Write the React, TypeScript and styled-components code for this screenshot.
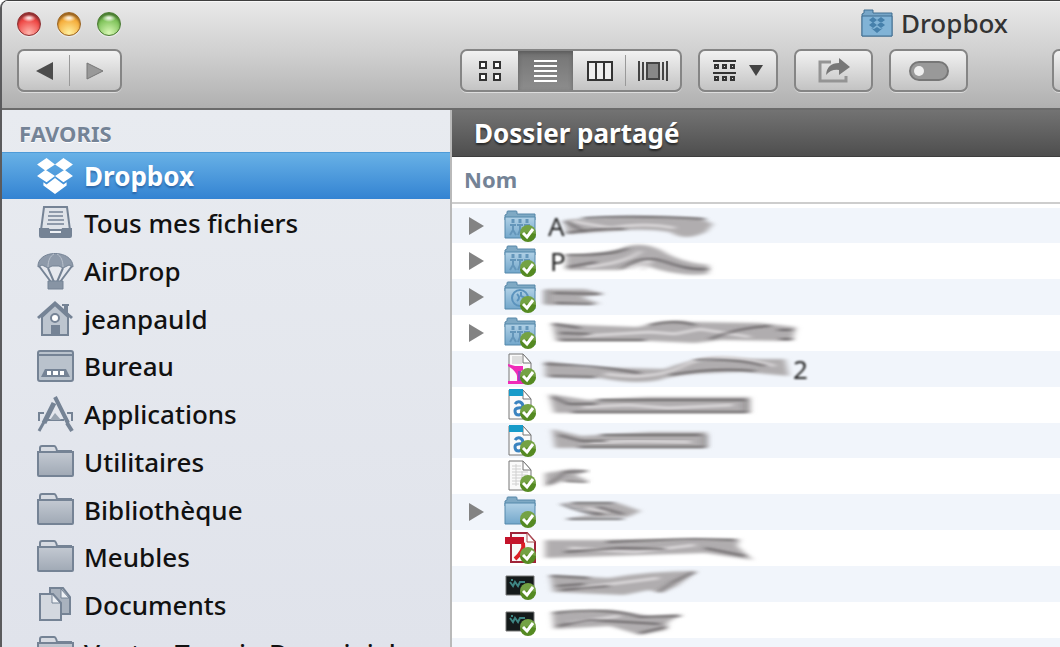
import React from "react";
import styled, { createGlobalStyle, css } from "styled-components";

const Global = createGlobalStyle`
  * { box-sizing: border-box; }
  body { margin: 0; background: #fff; font-family: "Noto Sans", "Open Sans", sans-serif; color: #111; overflow: hidden; }
  ul { list-style: none; margin: 0; padding: 0; }
  button { font: inherit; color: inherit; }
  svg { display: block; flex: none; }
`;

const Window = styled.main`
  display: flex;
  flex-direction: column;
  height: 100vh;
  overflow: hidden;
  border-left: 2px solid #5b5b5d;
  border-top: 1px solid #3f3f3f;
  border-top-left-radius: 8px;
`;

const Chrome = styled.header`
  flex: none;
  padding: 6px 0 16px;
  background: linear-gradient(#e9e9e9, #cfcfcf 50%, #b0b0b0);
  border-bottom: 2px solid #6b6b6b;
  box-shadow: inset 0 1px 0 #f8f8f8;
  overflow: hidden;
`;

const TitleRow = styled.div`
  display: flex;
  align-items: center;
  justify-content: space-between;
  height: 34px;
  padding: 0 52px 0 15px;
`;

const Lights = styled.div`
  display: flex;
  gap: 16px;
`;

const Light = styled.button<{ $edge: string; $mid: string; $low: string }>`
  width: 24px;
  height: 24px;
  padding: 0;
  border: 1px solid ${(p) => p.$edge};
  border-radius: 50%;
  background:
    radial-gradient(ellipse 7px 4px at 50% 5px, #fffc 20%, #fff0),
    radial-gradient(circle at 50% 90%, ${(p) => p.$low}, ${(p) => p.$mid} 60%, ${(p) => p.$edge});
  box-shadow: inset 0 2px 2px ${(p) => p.$edge}, 0 1px 1px #fff9;
`;

const Title = styled.h1`
  display: flex;
  align-items: center;
  align-self: flex-start;
  gap: 8px;
  margin: 0;
  font-size: 26px;
  font-weight: 500;
  line-height: 32px;
  color: #333;
`;

const Tools = styled.div`
  display: flex;
  gap: 16px;
  margin-top: 8px;
  padding-left: 15px;
`;

const Group = styled.div<{ $before?: number }>`
  display: flex;
  flex: none;
  height: 43px;
  margin-left: ${(p) => p.$before ?? 0}px;
  border: 2px solid #858585;
  border-radius: 7px;
  background: linear-gradient(#f2f2f2, #c3c3c3);
  box-shadow: 0 1px 0 #ddd;
  overflow: hidden;
`;

const Tool = styled.button<{ $width: number; $on?: boolean; $split?: boolean }>`
  position: relative;
  display: flex;
  align-items: center;
  justify-content: center;
  gap: 12px;
  width: ${(p) => p.$width}px;
  padding: 0;
  border: 0;
  background: none;
  ${(p) => p.$on && css`
    background: linear-gradient(#747474, #8d8d8d);
    box-shadow: inset 0 2px 4px #4448;
  `}
  ${(p) => p.$split && css`
    &::after {
      content: "";
      position: absolute;
      right: 0;
      top: 4px;
      bottom: 4px;
      width: 1px;
      background: #999;
    }
  `}
`;

const Body = styled.div`
  display: flex;
  flex: 1;
  min-height: 0;
`;

const Sidebar = styled.nav`
  flex: 0 0 450px;
  border-right: 2px solid #b9b9b9;
  background: linear-gradient(#e8ebf0, #e0e3eb);
  overflow: hidden;
`;

const SideHeading = styled.h2`
  height: 42px;
  margin: 0;
  padding-left: 17px;
  font-size: 22px;
  font-weight: 700;
  line-height: 46px;
  color: #748396;
  text-shadow: 0 1px 0 #fff;
`;

const Place = styled.a<{ $on?: boolean }>`
  display: flex;
  align-items: center;
  gap: 10px;
  height: 48px;
  padding-left: 34px;
  font-size: 26px;
  font-weight: 500;
  line-height: 34px;
  color: #111;
  text-decoration: none;
  white-space: nowrap;
  li:nth-child(4n) > & { height: 47px; }
  ${(p) => p.$on && css`
    height: 47px;
    border-top: 1px solid #4e9bd8;
    background: linear-gradient(#68b1e6, #3383d2);
    color: #fff;
    font-weight: 700;
    text-shadow: 0 2px 2px #1f4f8a99;
  `}
`;

const Content = styled.section`
  flex: 1;
  min-width: 0;
  background: #fff;
  overflow: hidden;
`;

const Banner = styled.h2`
  margin: 0;
  padding-left: 22px;
  border-bottom: 1px solid #3e3e3e;
  background: linear-gradient(#737373, #4e4e4e);
  font-size: 26px;
  font-weight: 700;
  line-height: 46px;
  color: #fff;
  text-shadow: 0 2px 2px #0008;
`;

const Files = styled.table`
  width: 100%;
  border-collapse: collapse;
  th {
    height: 46px;
    padding: 0 0 2px 12px;
    border-bottom: 2px solid #cdcdcd;
    text-align: left;
    font-size: 22px;
    font-weight: 700;
    line-height: 28px;
    color: #748396;
  }
  td { padding: 0; }
  tbody::before { content: ""; display: block; height: 4px; }
  tbody tr:nth-child(odd) { background: #f1f5fb; }
`;

const FileRow = styled.div`
  display: flex;
  align-items: center;
  height: 36px;
  padding-left: 16px;
  tr:nth-child(6n + 1) & { height: 35px; }
`;

const Disclosure = styled.button`
  display: flex;
  flex: none;
  width: 36px;
  padding: 0;
  border: 0;
  background: none;
`;

const Kept = styled.span`
  font-size: 26px;
  line-height: 34px;
  color: #222;
  filter: blur(1px);
`;

const NameCell = styled.div<{ $indent: number }>`
  display: flex;
  align-items: center;
  height: 36px;
  margin-left: ${(p) => p.$indent}px;
`;

/* ---------- drawings ---------- */

const Boxes = ({ size, fill }: { size: number; fill: string }) => (
  <svg width={size} height={size} viewBox="0 0 36 36" fill={fill}>
    <path d="M10 1l8 6-9 6-8-6zM26 1l9 6-8 6-9-6zM1 18l8-6 9 6-8 6zM27 12l8 6-9 6-8-6zM18 20l8 6 3-2v3l-11 8-11-8v-3l3 2z" />
  </svg>
);

const Stroke = "#758395";

const Drawer = () => (
  <svg width="38" height="38" viewBox="0 0 38 38">
    <path d="M8 3h23l3 23H5z" fill="#dfe3e9" stroke={Stroke} strokeWidth="2" />
    <path d="M13 8h14M12 12h15M12 16h16M11 20h17" stroke={Stroke} strokeWidth="1.500" />
    <path d="M3 24h10l1 3h11l1-3h10v8q0 2-2 2H5q-2 0-2-2z" fill={Stroke} />
    <path d="M14 27h11v2H14z" fill="#eef1f5" />
  </svg>
);
const Parachute = () => (
  <svg width="38" height="38" viewBox="0 0 38 38">
    <path d="M3 14l12 16M36 14L24 30M12 16l6 14M27 16l-6 14" stroke={Stroke} strokeWidth="2" />
    <path d="M2 15C1-3 37-3 37 15l-4-2-6 3-4-2h-7l-4 2-6-3z" fill="#8e9aaa" stroke={Stroke} strokeWidth="1" />
    <path d="M12 15c0-6 2-11 6-13M27 15c0-6-2-11-6-13" stroke="#b9c1cc" fill="none" />
    <path d="M12 29h15v8H12z" fill="#8794a4" stroke={Stroke} />
  </svg>
);
const House = () => (
  <svg width="38" height="38" viewBox="0 0 38 38">
    <path d="M6 17L19 5l13 12v18H6z" fill="#bdc5cf" stroke={Stroke} strokeWidth="2" />
    <path d="M2 18L19 3l17 15" fill="none" stroke={Stroke} strokeWidth="3" />
    <path d="M26 4h7v2h-1v8l-4-4V6h-2zM15 25h9v10h-9z" fill={Stroke} />
    <circle cx="19" cy="18" r="4" fill="#fff" stroke={Stroke} strokeWidth="2" />
  </svg>
);
const Desktop = () => (
  <svg width="38" height="38" viewBox="0 0 38 38">
    <rect x="2" y="4" width="35" height="30" rx="2" fill="#b9c2cc" stroke={Stroke} strokeWidth="2" />
    <path d="M3 8h33" stroke={Stroke} strokeWidth="2" />
    <path d="M9 22h21l4 8H5z" fill={Stroke} />
    <path d="M11 24h4v4h-4zM17 24h5v4h-5zM24 24h4v4h-4z" fill="#fff" />
  </svg>
);
const Apps = () => (
  <svg width="38" height="38" viewBox="0 0 38 38" fill="none">
    <path d="M3 26v-8h5M36 26v-8h-5M11 25h17" stroke={Stroke} strokeWidth="2" />
    <path d="M14 25l5-7 6 7z" fill="#9aa5b2" />
    <path d="M18 8L8 28" stroke={Stroke} strokeWidth="5" />
    <path d="M8 27l-5 9" stroke={Stroke} strokeWidth="3" />
    <path d="M19 2l13 26M31 28l5 8" stroke={Stroke} strokeWidth="4" />
  </svg>
);
const GreyFolder = () => (
  <svg width="38" height="38" viewBox="0 0 38 38">
    <defs>
      <linearGradient id="grey" x2="0" y2="1"><stop stopColor="#c3c9d2" /><stop offset="1" stopColor="#a0a9b5" /></linearGradient>
    </defs>
    <path d="M4 9V5q0-2 2-2h12q2 0 3 5h15" fill="#d7dbe2" stroke={Stroke} strokeWidth="2" />
    <path d="M2 9h35v23q0 1-1 1H3q-1 0-1-1z" fill="url(#grey)" stroke={Stroke} strokeWidth="2" />
  </svg>
);
const Papers = () => (
  <svg width="38" height="38" viewBox="0 0 38 38">
    <path d="M14 2h13l7 9v17H14z" fill="#a9b2be" stroke={Stroke} strokeWidth="2" />
    <path d="M25 3v9h8z" fill="#eef1f5" stroke={Stroke} />
    <path d="M4 8h13l8 9v17H4z" fill="#d3d8df" stroke={Stroke} strokeWidth="2" />
    <path d="M16 8v9h8z" fill="#eef1f5" stroke={Stroke} />
  </svg>
);

const Badge = () => (
  <g>
    <circle cx="24" cy="24" r="8" fill="#74a244" />
    <path d="M16 25a8 8 0 0 0 16 0q-8-3-16 0z" fill="#558a22" />
    <path d="M19 24l4 4 6-8" fill="none" stroke="#fff" strokeWidth="3" />
  </g>
);

type Kind = "people" | "globe" | "folder" | "magenta" | "calc" | "text" | "pdf" | "term";

const FileIcon = ({ kind }: { kind: Kind }) => {
  const folder = kind === "people" || kind === "globe" || kind === "folder";
  const sheet = kind === "magenta" || kind === "calc" || kind === "text";
  return (
    <svg width="32" height="34" viewBox="0 0 32 34">
      <defs>
        <linearGradient id="blue" x2="0" y2="1"><stop stopColor="#b1d1e6" /><stop offset="1" stopColor="#73a7cb" /></linearGradient>
      </defs>
      {folder && <>
        <path d="M1 6l2-1V3q0-1 1-1h8q1 0 1 1v2h18v6H1z" fill="#7fa9c4" stroke="#5687a8" />
        <path d="M1 8h30v21H1z" fill="url(#blue)" stroke="#5588ab" />
      </>}
      {kind === "people" && (
        <g fill="none" stroke="#6496ba" strokeWidth="2">
          <path d="M9 10v4M16 10v4M23 10v4" strokeWidth="3" />
          <path d="M6 16h6M13 16h6M20 16h6M9 15v6l-3 5M9 21l3 5M16 15v6l-2 5M16 21l2 5" />
        </g>
      )}
      {kind === "globe" && <g fill="none" stroke="#5b93bd" strokeWidth="2"><circle cx="16" cy="18" r="8" /><path d="M13 14q4 4 0 7M17 12v4l4 2" /></g>}
      {sheet && <>
        <path d="M5 2h14l8 9v20H5z" fill="#fafafa" stroke="#777" />
        <path d="M19 2v9h8z" fill="#fff" stroke="#777" />
      </>}
      {kind === "magenta" && <>
        <path d="M8 4h10v8H8z" fill="#dedede" />
        <path d="M4 12l7 2h8v4q-3 1-3 5v6h4v3H4v-3h9v-5q-1-5-9-10z" fill="#f02bb8" />
        <path d="M14 19h3v10h-3z" fill="#9c3fc4" />
      </>}
      {kind === "calc" && <>
        <path d="M5 1h14v7H5z" fill="#179bc9" />
        <path d="M11 16q2-3 5-2t3 5v8M19 20q-8-1-8 3t4 4l4-2" fill="none" stroke="#3a83c0" strokeWidth="3" />
      </>}
      {kind === "text" && <path d="M8 7h9M8 10h9M8 13h16M8 16h16M8 19h16M8 22h9M8 25h7M12 5v22M18 12v14" stroke="#d0d0d0" />}
      {kind === "pdf" && <>
        <path d="M7 2h16l8 9v20H7z" fill="#f8f8f8" stroke="#a02439" strokeWidth="2" />
        <path d="M23 2v9h8z" fill="#fff" stroke="#a55" />
        <path d="M1 6h19v7H1z" fill="#c4142b" />
        <path d="M19 12q2 7-8 16" fill="none" stroke="#dc1f26" strokeWidth="4" />
      </>}
      {kind === "term" && <>
        <path d="M2 9h28v19H2z" fill="#151a1b" stroke="#777" />
        <path d="M6 15l3 4 2-4 3 4 2-4h5M7 13h2" fill="none" stroke="#3e8583" strokeWidth="2" />
      </>}
      <Badge />
    </svg>
  );
};

/* A rubbed-out name: a soft grey streak with darker and lighter strands. */
const Smear = ({ width, body, dark, light }: { width: number; body: string; dark: string; light?: string }) => (
  <svg width={width} height="36" viewBox={`0 0 ${width} 36`} overflow="visible">
    <defs>
      <filter id="soft" x="-10%" y="-50%" width="120%" height="200%"><feGaussianBlur stdDeviation="3 1.800" /></filter>
      <filter id="fine" x="-10%" y="-50%" width="120%" height="200%"><feGaussianBlur stdDeviation="3 1" /></filter>
    </defs>
    <path d={body} fill="#b0adaf" filter="url(#soft)" />
    {light && <path d={light} fill="none" stroke="#d8d5d7" strokeWidth="3" filter="url(#fine)" />}
    <path d={dark} fill="none" stroke="#4e494c" strokeWidth="2" opacity="0.700" filter="url(#fine)" />
  </svg>
);

type File = { kind: Kind; open?: boolean; indent: number; first?: string; last?: string; width: number; body: string; dark: string; light?: string };

const files: File[] = [
  { kind: "people", open: true, indent: 12, first: "A", width: 150,
    body: "M0 12Q50 8 80 8L135 10 148 16 141 24Q120 34 105 24 80 20 50 23L2 26z",
    dark: "M18 10Q70 7 140 11M2 25Q40 20 60 21M0 13L20 24", light: "M6 13L45 20Q80 14 110 20" },
  { kind: "people", open: true, indent: 14, first: "P", width: 150,
    body: "M0 12Q50 10 62 3 78-1 95 7 115 20 143 22L142 31Q120 34 90 26 70 18 55 27L0 27z",
    dark: "M0 12Q45 13 62 5M56 26Q75 10 100 19T142 26M2 24L30 19", light: "M20 24Q60 20 75 8M64 26L84 16M76 27L86 17" },
  { kind: "globe", open: true, indent: 9, width: 62,
    body: "M0 10L40 10 60 15 36 18 56 25 0 26z",
    dark: "M1 11v14M8 14L55 15M10 24L48 25", light: "M8 19h28" },
  { kind: "people", open: true, indent: 14, width: 250,
    body: "M2 8L32 10 88 12Q120 3 140 7L210 8 246 12 242 26 170 25 145 28 100 26 6 26z",
    dark: "M3 9L30 13M10 18L40 19M10 25H95M100 10Q125 4 145 10M160 24Q190 12 220 11M228 15h14M230 24h12", light: "M34 21L100 17 125 19 150 14 200 22" },
  { kind: "magenta", indent: 9, last: "2", width: 248,
    body: "M0 10L40 16 120 18Q150 6 180 8L240 8 244 25 200 21Q130 22 115 29 90 34 55 27L0 26z",
    dark: "M0 13Q50 14 95 22M5 25L50 26M125 24Q170 16 210 20M150 9Q190 7 220 15", light: "M60 23Q110 30 140 14T230 15" },
  { kind: "calc", indent: 12, width: 206,
    body: "M1 7L40 13 100 10H202V26H6z",
    dark: "M5 10L20 17 48 17M24 25H200M50 13H198M198 13v12", light: "M35 20L80 18 120 21 185 18" },
  { kind: "calc", indent: 15, width: 160,
    body: "M1 6L30 13 100 9H156V25H4z",
    dark: "M8 12L30 18 55 18M28 24H154M50 12H150M154 12v12", light: "M40 20L80 18 140 19" },
  { kind: "text", indent: 9, width: 50,
    body: "M0 15L28 11 42 13 30 17 44 23 18 23 0 29z", dark: "M4 26Q15 19 20 14L42 13M20 23L42 24", light: "M4 18L26 18" },
  { kind: "folder", open: true, indent: 22, width: 86,
    body: "M3 9L60 9 83 17 70 23 8 25 36 20z", dark: "M4 10Q25 20 45 20M14 9h42M10 25h55M40 13L65 20", light: "M28 14L50 18" },
  { kind: "pdf", indent: 9, width: 210,
    body: "M0 10H60L195 9 192 16 208 30 160 23 0 28z", dark: "M62 12Q110 10 150 9L190 10M20 22L75 18 120 19M160 18L200 26", light: "M24 18L90 22 150 15" },
  { kind: "term", indent: 13, width: 150,
    body: "M1 9L60 12Q100 5 148 5L128 20 112 27 100 24 75 29 4 26z", dark: "M2 10L40 12M8 20L35 18M110 26L124 16 145 6M12 24L60 20", light: "M30 22L110 12" },
  { kind: "term", indent: 14, width: 140,
    body: "M2 10L60 8 100 14 132 12 118 20 116 28 90 33 60 24 4 27z", dark: "M4 11Q60 5 90 15L130 14M8 24L40 18 110 22M90 31L116 25", light: "M20 21L70 14" },
];

const places: [string, () => React.JSX.Element][] = [
  ["Tous mes fichiers", Drawer],
  ["AirDrop", Parachute],
  ["jeanpauld", House],
  ["Bureau", Desktop],
  ["Applications", Apps],
  ["Utilitaires", GreyFolder],
  ["Bibliothèque", GreyFolder],
  ["Meubles", GreyFolder],
  ["Documents", Papers],
  ["Ventes Terrain Domainial", GreyFolder],
];

export default function App() {
  return (
    <>
      <Global />
      <Window>
        <Chrome>
          <TitleRow>
            <Lights>
              <Light aria-label="Fermer" $edge="#8e3032" $mid="#ee4744" $low="#ffb4ac" />
              <Light aria-label="Réduire" $edge="#9b6421" $mid="#f5ad3b" $low="#fff0a0" />
              <Light aria-label="Agrandir" $edge="#4a7c32" $mid="#80c35b" $low="#d8f8b5" />
            </Lights>
            <Title>
              <svg width="32" height="28" viewBox="0 0 32 28">
                <path d="M1 5l2-1V1h9v3h19v23H1z" fill="#77a6c8" stroke="#416f91" />
                <path d="M1 7h30v20H1z" fill="#81b3d6" stroke="#416f91" />
                <path d="M12 8l4 3-4 3-4-3zM20 8l4 3-4 3-4-3zM8 16l4-3 4 3-4 3zM24 16l-4-3-4 3 4 3zM16 18l3 2 3-1-6 5-6-5 3 1z" fill="#4680ab" />
              </svg>
              Dropbox
            </Title>
          </TitleRow>
          <Tools>
            <Group>
              <Tool aria-label="Précédent" $width={51} $split>
                <svg width="18" height="18" viewBox="0 0 18 18"><path d="M0 9L17 0v18z" fill="#4c4c4c" /></svg>
              </Tool>
              <Tool aria-label="Suivant" $width={50}>
                <svg width="18" height="18" viewBox="0 0 18 18"><path d="M17 9L1 1v16z" fill="#999" stroke="#777" /></svg>
              </Tool>
            </Group>
            <Group $before={322}>
              <Tool aria-label="Icônes" $width={56}>
                <svg width="24" height="22" viewBox="0 0 24 22" fill="#fff" stroke="#333" strokeWidth="2">
                  <path d="M2 2h6v6H2zM16 2h6v6h-6zM2 14h6v6H2zM16 14h6v6h-6z" />
                </svg>
              </Tool>
              <Tool aria-label="Liste" $width={55} $on>
                <svg width="24" height="24" viewBox="0 0 24 24" stroke="#fff" strokeWidth="2"><path d="M0 2h23M0 7h23M0 12h23M0 17h23M0 22h23" /></svg>
              </Tool>
              <Tool aria-label="Colonnes" $width={53} $split>
                <svg width="28" height="22" viewBox="0 0 28 22" fill="#eee" stroke="#333" strokeWidth="2"><path d="M2 2h24v18H2zM10 2v18M18 2v18" /></svg>
              </Tool>
              <Tool aria-label="Cover Flow" $width={54}>
                <svg width="32" height="22" viewBox="0 0 32 22" stroke="#444" strokeWidth="2">
                  <path d="M2 1v20M6 2v18M26 2v18M30 1v20" /><path d="M10 3h12v16H10z" fill="#888" />
                </svg>
              </Tool>
            </Group>
            <Group>
              <Tool aria-label="Organiser" $width={76}>
                <svg width="24" height="24" viewBox="0 0 24 24" fill="#ddd" stroke="#333" strokeWidth="2">
                  <path d="M0 2h23M0 14h23M2 6h3v3H2zM10 6h3v3h-3zM18 6h3v3h-3zM2 18h3v3H2zM10 18h3v3h-3zM18 18h3v3h-3z" />
                </svg>
                <svg width="14" height="11" viewBox="0 0 14 11"><path d="M0 0h14L7 11z" fill="#444" /></svg>
              </Tool>
            </Group>
            <Group>
              <Tool aria-label="Partager" $width={75}>
                <svg width="34" height="26" viewBox="0 0 34 26">
                  <path d="M14 4H3v19h26v-5" fill="none" stroke="#949494" strokeWidth="3" />
                  <path d="M9 17Q10 5 22 5V0l11 9-11 8v-5q-8-1-13 5z" fill="#777" />
                </svg>
              </Tool>
            </Group>
            <Group>
              <Tool aria-label="Étiquettes" $width={75}>
                <svg width="40" height="20" viewBox="0 0 40 20">
                  <rect x="1" y="1" width="38" height="18" rx="9" fill="#999" stroke="#777" strokeWidth="2" />
                  <circle cx="10" cy="10" r="5" fill="#eee" />
                </svg>
              </Tool>
            </Group>
            <Group $before={68}>
              <Tool aria-label="Rechercher" $width={76} />
            </Group>
          </Tools>
        </Chrome>
        <Body>
          <Sidebar>
            <SideHeading>FAVORIS</SideHeading>
            <ul>
              <li><Place href="#dropbox" $on><Boxes size={38} fill="#fff" />Dropbox</Place></li>
              {places.map(([name, Icon]) => (
                <li key={name}><Place href="#"><Icon />{name}</Place></li>
              ))}
            </ul>
          </Sidebar>
          <Content>
            <Banner>Dossier partagé</Banner>
            <Files>
              <thead><tr><th scope="col">Nom</th></tr></thead>
              <tbody>
                {files.map((f, i) => (
                  <tr key={i}>
                    <td>
                      <FileRow>
                        <Disclosure as={f.open ? "button" : "span"} aria-label={f.open ? "Déplier" : undefined}>
                          {f.open && <svg width="16" height="18" viewBox="0 0 16 18"><path d="M1 0l15 9-15 9z" fill="#838383" /></svg>}
                        </Disclosure>
                        <FileIcon kind={f.kind} />
                        <NameCell $indent={f.indent}>
                          {f.first && <Kept>{f.first}</Kept>}
                          <Smear width={f.width} body={f.body} dark={f.dark} light={f.light} />
                          {f.last && <Kept>{f.last}</Kept>}
                        </NameCell>
                      </FileRow>
                    </td>
                  </tr>
                ))}
                <tr><td><FileRow /></td></tr>
              </tbody>
            </Files>
          </Content>
        </Body>
      </Window>
    </>
  );
}
